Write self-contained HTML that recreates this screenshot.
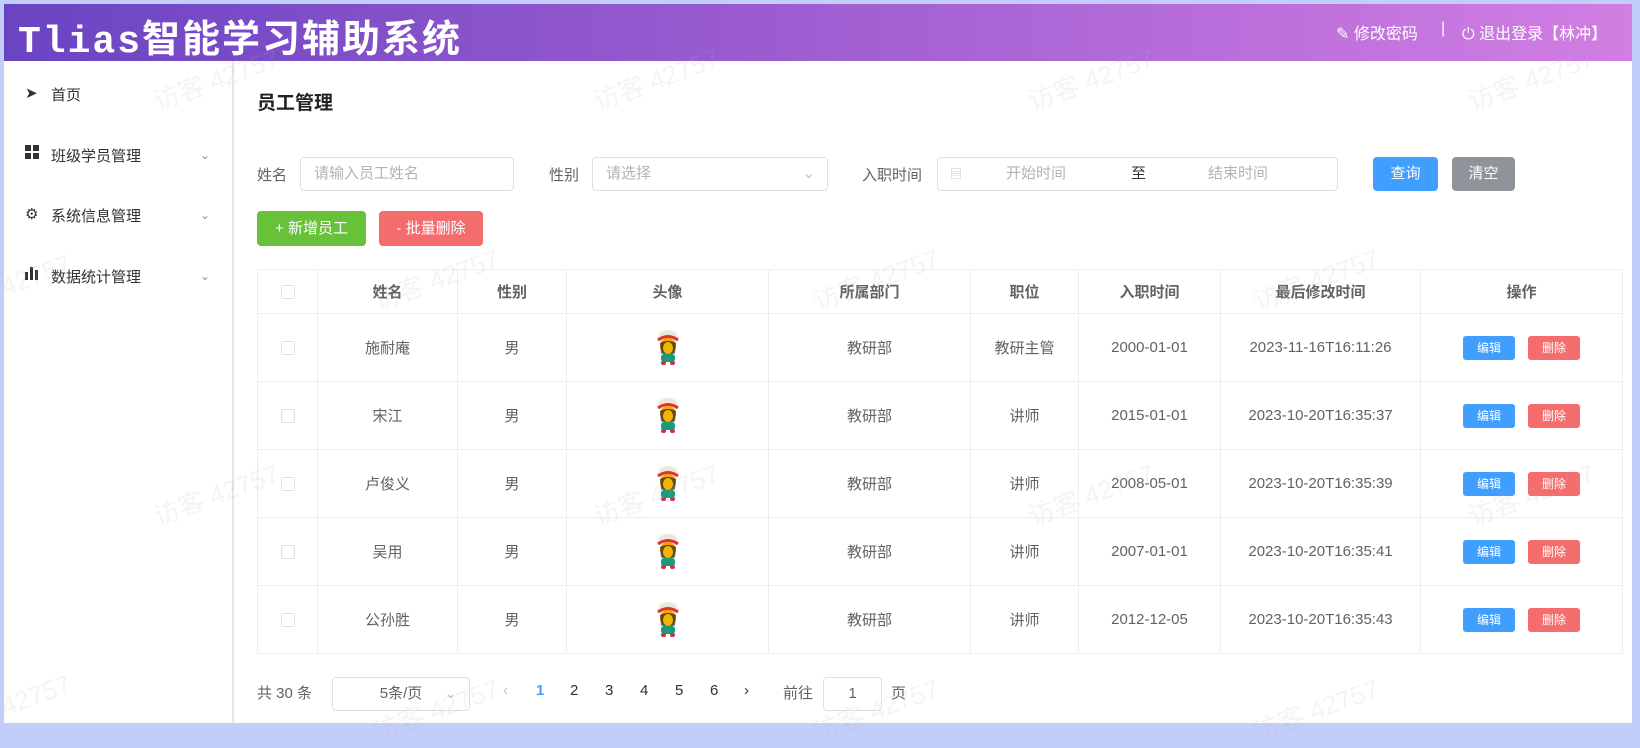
<!DOCTYPE html>
<html><head><meta charset="utf-8"><style>
*{margin:0;padding:0;box-sizing:border-box}
body{width:1640px;height:728px;background:#c3cdfa;font-family:"Liberation Sans","Noto Sans CJK SC",sans-serif;position:relative;overflow:hidden;color:#606266}
.abs{position:absolute}
.hdr{left:4px;top:4px;width:1628px;height:57px;background:linear-gradient(90deg,#6a44c2 0%,#9a5bd0 45%,#d27ee3 100%)}
.title{left:18px;top:8px;font-size:38px;font-weight:bold;color:#fff;letter-spacing:2px;font-family:"Liberation Mono","Noto Sans CJK SC",monospace}
.hr{top:20px;color:#fff;font-size:16px}
.page{left:4px;top:61px;width:1628px;height:662px;background:#fff}
.side{left:4px;top:61px;width:230px;height:662px;border-right:2px solid #e6e6e6}
.mi{left:25px;font-size:15px;color:#303133}
.mi span{position:absolute;left:26px;top:0;white-space:nowrap}
.chev{left:200px;color:#909399;font-size:12px}
.lbl{font-size:15px;color:#606266}
.inp{border:1px solid #dcdfe6;border-radius:4px;height:34px;background:#fff;font-size:15px;color:#b0b3b8;line-height:32px}
.btn{border-radius:4px;color:#fff;font-size:15px;text-align:center}
table{position:absolute;left:257px;top:269px;border-collapse:collapse;width:1366px;font-size:15px;color:#606266}
td,th{border:1px solid #ebeef5;text-align:center;height:68px;font-weight:normal}
th{height:44px;color:#606266;font-weight:bold}
.cb{display:inline-block;width:14px;height:14px;border:1px solid #dcdfe6;border-radius:2px;vertical-align:middle}
.eb,.db{display:inline-block;width:52px;height:24px;line-height:24px;border-radius:3px;color:#fff;font-size:12px}
.eb{background:#409eff}.db{background:#f56c6c;margin-left:13px}
.wm{color:rgba(180,180,190,.15);font-size:26px;transform:rotate(-20deg);white-space:nowrap}
.pg{top:682px;font-size:15px;color:#303133}
</style></head><body>
<div class="abs hdr"></div>
<div class="abs title">Tlias智能学习辅助系统</div>
<div class="abs hr" style="left:1336px">&#9998; 修改密码</div>
<div class="abs hr" style="left:1441px">|</div>
<div class="abs hr" style="left:1462px">&#9211; 退出登录【林冲】</div>
<div class="abs page"></div>
<div class="abs side"></div>
<div class="abs mi" style="top:84px">&#10148;<span>首页</span></div>
<div class="abs mi" style="top:145px"><svg width="14" height="14" style="vertical-align:-1px"><rect x="0" y="0" width="6" height="6" fill="#303133"/><rect x="8" y="0" width="6" height="6" fill="#303133"/><rect x="0" y="8" width="6" height="6" fill="#303133"/><rect x="8" y="8" width="6" height="6" fill="#303133"/></svg><span>班级学员管理</span></div>
<div class="abs mi" style="top:205px">&#9881;<span>系统信息管理</span></div>
<div class="abs mi" style="top:266px"><svg width="14" height="14" style="vertical-align:-1px"><rect x="0" y="6" width="3" height="8" fill="#303133"/><rect x="5" y="1" width="3" height="13" fill="#303133"/><rect x="10" y="4" width="3" height="10" fill="#303133"/></svg><span>数据统计管理</span></div>
<div class="abs chev" style="top:148px">&#8964;</div>
<div class="abs chev" style="top:208px">&#8964;</div>
<div class="abs chev" style="top:269px">&#8964;</div>

<div class="abs" style="left:257px;top:88px;font-size:19px;font-weight:bold;color:#222">员工管理</div>

<div class="abs lbl" style="left:257px;top:164px">姓名</div>
<div class="abs inp" style="left:300px;top:157px;width:214px;padding-left:13px">请输入员工姓名</div>
<div class="abs lbl" style="left:549px;top:164px">性别</div>
<div class="abs inp" style="left:592px;top:157px;width:236px;padding-left:13px">请选择<span style="position:absolute;right:12px;top:0;color:#c0c4cc">&#8964;</span></div>
<div class="abs lbl" style="left:862px;top:164px">入职时间</div>
<div class="abs inp" style="left:937px;top:157px;width:401px"><span style="position:absolute;left:12px;color:#c0c4cc;font-size:12px">&#9636;</span><span style="position:absolute;left:68px">开始时间</span><span style="position:absolute;left:193px;color:#303133">至</span><span style="position:absolute;left:270px">结束时间</span></div>
<div class="abs btn" style="left:1373px;top:157px;width:65px;height:34px;line-height:34px;background:#409eff">查询</div>
<div class="abs btn" style="left:1452px;top:157px;width:63px;height:34px;line-height:34px;background:#909399">清空</div>
<div class="abs btn" style="left:257px;top:211px;width:109px;height:35px;line-height:35px;background:#67c23a">+ 新增员工</div>
<div class="abs btn" style="left:379px;top:211px;width:104px;height:35px;line-height:35px;background:#f56c6c">- 批量删除</div>

<table>
<tr><th style="width:60px"><span class="cb"></span></th><th style="width:140px">姓名</th><th style="width:109px">性别</th><th style="width:202px">头像</th><th style="width:202px">所属部门</th><th style="width:108px">职位</th><th style="width:142px">入职时间</th><th style="width:200px">最后修改时间</th><th>操作</th></tr>
<tr><td><span class="cb"></span></td><td>施耐庵</td><td>男</td><td>AV</td><td>教研部</td><td>教研主管</td><td>2000-01-01</td><td>2023-11-16T16:11:26</td><td><span class="eb">编辑</span><span class="db">删除</span></td></tr>
<tr><td><span class="cb"></span></td><td>宋江</td><td>男</td><td>AV</td><td>教研部</td><td>讲师</td><td>2015-01-01</td><td>2023-10-20T16:35:37</td><td><span class="eb">编辑</span><span class="db">删除</span></td></tr>
<tr><td><span class="cb"></span></td><td>卢俊义</td><td>男</td><td>AV</td><td>教研部</td><td>讲师</td><td>2008-05-01</td><td>2023-10-20T16:35:39</td><td><span class="eb">编辑</span><span class="db">删除</span></td></tr>
<tr><td><span class="cb"></span></td><td>吴用</td><td>男</td><td>AV</td><td>教研部</td><td>讲师</td><td>2007-01-01</td><td>2023-10-20T16:35:41</td><td><span class="eb">编辑</span><span class="db">删除</span></td></tr>
<tr><td><span class="cb"></span></td><td>公孙胜</td><td>男</td><td>AV</td><td>教研部</td><td>讲师</td><td>2012-12-05</td><td>2023-10-20T16:35:43</td><td><span class="eb">编辑</span><span class="db">删除</span></td></tr>
</table>

<div class="abs pg" style="left:257px;color:#606266">共 30 条</div>
<div class="abs inp" style="left:332px;top:677px;width:138px;color:#606266;text-align:center">5条/页<span style="position:absolute;right:12px;color:#c0c4cc">&#8964;</span></div>
<div class="abs pg" style="left:503px;color:#c0c4cc">‹</div>
<div class="abs pg" style="left:536px;color:#409eff;font-weight:bold">1</div>
<div class="abs pg" style="left:570px">2</div>
<div class="abs pg" style="left:605px">3</div>
<div class="abs pg" style="left:640px">4</div>
<div class="abs pg" style="left:675px">5</div>
<div class="abs pg" style="left:710px">6</div>
<div class="abs pg" style="left:744px">›</div>
<div class="abs pg" style="left:783px;color:#606266">前往</div>
<div class="abs inp" style="left:823px;top:677px;width:59px;color:#606266;text-align:center">1</div>
<div class="abs pg" style="left:891px;color:#606266">页</div>

<div class="abs wm" style="left:150px;top:60px">访客 42757</div>
<div class="abs wm" style="left:590px;top:60px">访客 42757</div>
<div class="abs wm" style="left:1025px;top:60px">访客 42757</div>
<div class="abs wm" style="left:1465px;top:60px">访客 42757</div>
<div class="abs wm" style="left:0px;top:260px">42757</div>
<div class="abs wm" style="left:370px;top:260px">访客 42757</div>
<div class="abs wm" style="left:810px;top:260px">访客 42757</div>
<div class="abs wm" style="left:1250px;top:260px">访客 42757</div>
<div class="abs wm" style="left:150px;top:475px">访客 42757</div>
<div class="abs wm" style="left:590px;top:475px">访客 42757</div>
<div class="abs wm" style="left:1025px;top:475px">访客 42757</div>
<div class="abs wm" style="left:1465px;top:475px">访客 42757</div>
<div class="abs wm" style="left:0px;top:680px">42757</div>
<div class="abs wm" style="left:370px;top:690px">访客 42757</div>
<div class="abs wm" style="left:810px;top:690px">访客 42757</div>
<div class="abs wm" style="left:1250px;top:690px">访客 42757</div>

<script>
var svg='<svg width="28" height="38" viewBox="0 0 28 38" style="vertical-align:middle"><ellipse cx="14" cy="8" rx="10" ry="7" fill="#eee8d8"/><path d="M4 11 Q14 4 24 11" stroke="#e03030" stroke-width="3" fill="none"/><ellipse cx="14" cy="17" rx="8" ry="8" fill="#f5a800"/><path d="M6 14 Q14 10 22 14 L21 24 Q14 28 7 24Z" fill="#222" opacity=".7"/><ellipse cx="14" cy="19" rx="5" ry="6" fill="#f5b400"/><rect x="7" y="25" width="14" height="8" rx="3" fill="#1a9a7a"/><rect x="7" y="32" width="5" height="4" rx="2" fill="#d03050"/><rect x="16" y="32" width="5" height="4" rx="2" fill="#d03050"/></svg>';
document.querySelectorAll('td').forEach(function(t){if(t.textContent==='AV')t.innerHTML=svg;});
</script>
</body></html>
